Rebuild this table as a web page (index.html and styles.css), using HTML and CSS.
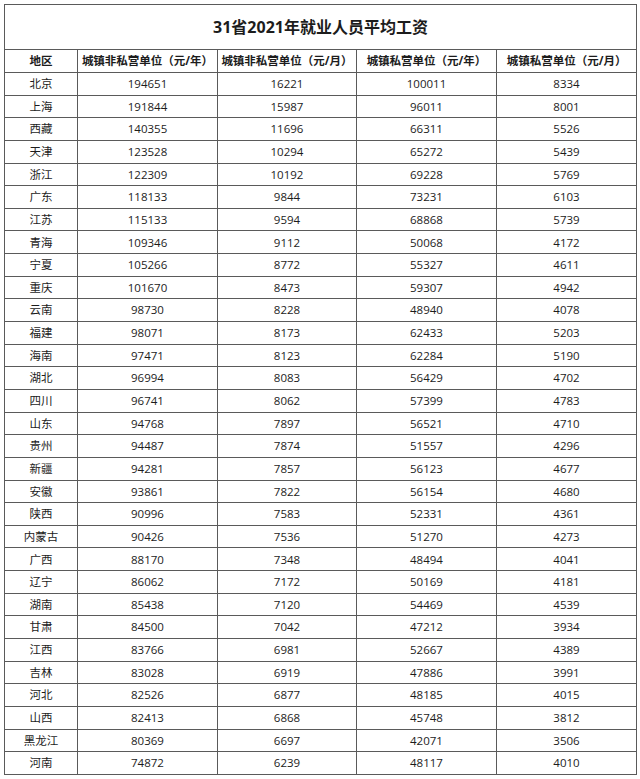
FILE: index.html
```html
<!DOCTYPE html>
<html lang="zh-CN">
<head>
<meta charset="utf-8">
<title>31省2021年就业人员平均工资</title>
<link rel="stylesheet" href="styles.css">
</head>
<body>
<table class="wage-table">
  <colgroup>
    <col class="c-region">
    <col class="c-a">
    <col class="c-b">
    <col class="c-c">
    <col class="c-d">
  </colgroup>
  <thead>
    <tr class="title-row"><th colspan="5">31省2021年就业人员平均工资</th></tr>
    <tr class="head-row">
      <th>地区</th>
      <th>城镇非私营单位（元/年）</th>
      <th>城镇非私营单位（元/月）</th>
      <th>城镇私营单位（元/年）</th>
      <th>城镇私营单位（元/月）</th>
    </tr>
  </thead>
  <tbody>
    <tr><td>北京</td><td>194651</td><td>16221</td><td>100011</td><td>8334</td></tr>
    <tr><td>上海</td><td>191844</td><td>15987</td><td>96011</td><td>8001</td></tr>
    <tr><td>西藏</td><td>140355</td><td>11696</td><td>66311</td><td>5526</td></tr>
    <tr><td>天津</td><td>123528</td><td>10294</td><td>65272</td><td>5439</td></tr>
    <tr><td>浙江</td><td>122309</td><td>10192</td><td>69228</td><td>5769</td></tr>
    <tr><td>广东</td><td>118133</td><td>9844</td><td>73231</td><td>6103</td></tr>
    <tr><td>江苏</td><td>115133</td><td>9594</td><td>68868</td><td>5739</td></tr>
    <tr><td>青海</td><td>109346</td><td>9112</td><td>50068</td><td>4172</td></tr>
    <tr><td>宁夏</td><td>105266</td><td>8772</td><td>55327</td><td>4611</td></tr>
    <tr><td>重庆</td><td>101670</td><td>8473</td><td>59307</td><td>4942</td></tr>
    <tr><td>云南</td><td>98730</td><td>8228</td><td>48940</td><td>4078</td></tr>
    <tr><td>福建</td><td>98071</td><td>8173</td><td>62433</td><td>5203</td></tr>
    <tr><td>海南</td><td>97471</td><td>8123</td><td>62284</td><td>5190</td></tr>
    <tr><td>湖北</td><td>96994</td><td>8083</td><td>56429</td><td>4702</td></tr>
    <tr><td>四川</td><td>96741</td><td>8062</td><td>57399</td><td>4783</td></tr>
    <tr><td>山东</td><td>94768</td><td>7897</td><td>56521</td><td>4710</td></tr>
    <tr><td>贵州</td><td>94487</td><td>7874</td><td>51557</td><td>4296</td></tr>
    <tr><td>新疆</td><td>94281</td><td>7857</td><td>56123</td><td>4677</td></tr>
    <tr><td>安徽</td><td>93861</td><td>7822</td><td>56154</td><td>4680</td></tr>
    <tr><td>陕西</td><td>90996</td><td>7583</td><td>52331</td><td>4361</td></tr>
    <tr><td>内蒙古</td><td>90426</td><td>7536</td><td>51270</td><td>4273</td></tr>
    <tr><td>广西</td><td>88170</td><td>7348</td><td>48494</td><td>4041</td></tr>
    <tr><td>辽宁</td><td>86062</td><td>7172</td><td>50169</td><td>4181</td></tr>
    <tr><td>湖南</td><td>85438</td><td>7120</td><td>54469</td><td>4539</td></tr>
    <tr><td>甘肃</td><td>84500</td><td>7042</td><td>47212</td><td>3934</td></tr>
    <tr><td>江西</td><td>83766</td><td>6981</td><td>52667</td><td>4389</td></tr>
    <tr><td>吉林</td><td>83028</td><td>6919</td><td>47886</td><td>3991</td></tr>
    <tr><td>河北</td><td>82526</td><td>6877</td><td>48185</td><td>4015</td></tr>
    <tr><td>山西</td><td>82413</td><td>6868</td><td>45748</td><td>3812</td></tr>
    <tr><td>黑龙江</td><td>80369</td><td>6697</td><td>42071</td><td>3506</td></tr>
    <tr><td>河南</td><td>74872</td><td>6239</td><td>48117</td><td>4010</td></tr>
  </tbody>
</table>
</body>
</html>
```
FILE: styles.css
```css
html, body {
  margin: 0;
  padding: 0;
  background: #ffffff;
}
body {
  padding: 4px;
  font-family: "Open Sans", "Noto Sans CJK SC", sans-serif;
  color: #1c1c1c;
}
.wage-table {
  width: 632px;
  border-collapse: collapse;
  table-layout: fixed;
  font-size: 11.5px;
}
.c-region { width: 73px; }
.c-a { width: 140px; }
.c-b { width: 139px; }
.c-c { width: 140px; }
.c-d { width: 140px; }
.wage-table th,
.wage-table td {
  border: 1px solid #5a5a5a;
  padding: 0;
  text-align: center;
  vertical-align: middle;
  line-height: 1;
  white-space: nowrap;
}
.title-row th {
  height: 44px;
  font-size: 16px;
  font-weight: 700;
}
.head-row th {
  height: 22px;
  font-weight: 700;
}
.wage-table tbody td {
  height: 21.65px;
}
```
